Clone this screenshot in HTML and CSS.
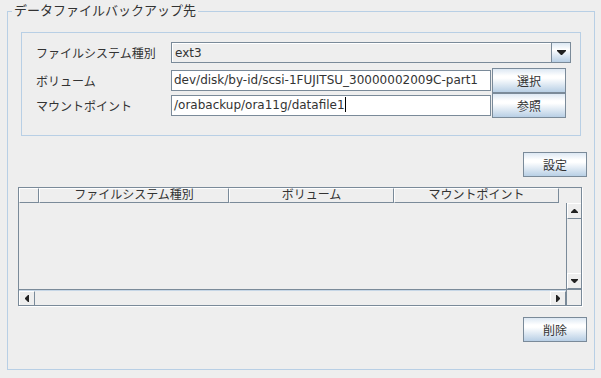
FILE: index.html
```html
<!DOCTYPE html>
<html lang="ja">
<head>
  <meta charset="UTF-8">
  <title>データファイルバックアップ先</title>
  <link rel="stylesheet" href="styles.css">
</head>
<body>
  <div class="group">
    <span class="group-title">データファイルバックアップ先</span>

    <div class="form-panel">
      <div class="form-row first">
        <span class="label">ファイルシステム種別</span>
        <div class="combo">
          <span class="combo-text">ext3</span>
          <span class="combo-btn">
            <svg width="9" height="6" viewBox="0 0 9 6"><polygon points="0,0 9,0 9,1 5,5 4,5 0,1" fill="#222"/></svg>
          </span>
        </div>
      </div>
      <div class="form-row">
        <span class="label">ボリューム</span>
        <div class="field">dev/disk/by-id/scsi-1FUJITSU_30000002009C-part1</div>
        <button class="btn btn-side">選択</button>
      </div>
      <div class="form-row">
        <span class="label">マウントポイント</span>
        <div class="field">/orabackup/ora11g/datafile1<span class="caret"></span></div>
        <button class="btn btn-side">参照</button>
      </div>
    </div>

    <div class="actions set-row">
      <button class="btn">設定</button>
    </div>

    <div class="table-pane">
      <div class="table-head">
        <div class="th th-num"></div>
        <div class="th th-type">ファイルシステム種別</div>
        <div class="th th-vol">ボリューム</div>
        <div class="th th-mount">マウントポイント</div>
      </div>
      <div class="table-main">
        <div class="viewport"></div>
        <div class="vscroll">
          <span class="sbtn">
            <svg width="7" height="4" viewBox="0 0 7 4"><polygon points="3,0 4,0 7,3 7,4 0,4 0,3" fill="#222"/></svg>
          </span>
          <span class="vtrack"></span>
          <span class="sbtn">
            <svg width="7" height="4" viewBox="0 0 7 4"><polygon points="0,0 7,0 7,1 4,4 3,4 0,1" fill="#222"/></svg>
          </span>
        </div>
      </div>
      <div class="table-foot">
        <div class="hscroll">
          <span class="sbtn">
            <svg width="4" height="7" viewBox="0 0 4 7"><polygon points="0,3 0,4 3,7 4,7 4,0 3,0" fill="#222"/></svg>
          </span>
          <span class="htrack"></span>
          <span class="sbtn">
            <svg width="4" height="7" viewBox="0 0 4 7"><polygon points="0,0 1,0 4,3 4,4 1,7 0,7" fill="#222"/></svg>
          </span>
        </div>
        <div class="corner"></div>
      </div>
    </div>

    <div class="actions del-row">
      <button class="btn">削除</button>
    </div>
  </div>
</body>
</html>
```

FILE: styles.css
```css
* {
  padding: 0;
  margin: 0;
  box-sizing: border-box;
}
html, body {
  width: 100%;
  height: 100%;
}
body {
  background: #eeeeee;
  color: #333333;
  font-family: "DejaVu Sans", "Noto Sans CJK JP", sans-serif;
  font-size: 12px;
  overflow: hidden;
}

/* titled border */
.group {
  position: relative;
  margin: 11px 0 0 7px;
  width: 588px;
  height: 359px;
  border: 1px solid #b8cfe5;
  padding: 20px 7px 0 10px;
}
.group-title {
  position: absolute;
  left: 4px;
  top: -9px;
  padding: 0 2px;
  background: #eeeeee;
  font-size: 13px;
  line-height: 16px;
}

/* form */
.form-panel {
  margin-left: 3px;
  width: 560px;
  height: 104px;
  border: 1px solid #b8cfe5;
  padding: 9px 0 0 14px;
}
.form-row {
  display: flex;
  align-items: center;
  height: 25px;
}
.form-row.first {
  height: 21px;
  margin-bottom: 5px;
}
.label {
  width: 135px;
  flex: none;
}
.combo {
  display: flex;
  width: 400px;
  height: 21px;
  border: 1px solid #7a8a99;
}
.combo-text {
  flex: 1;
  padding-left: 2px;
  line-height: 19px;
  border-top: 1px solid #ffffff;
  border-left: 1px solid #ffffff;
}
.combo-btn {
  width: 19px;
  display: flex;
  align-items: center;
  justify-content: center;
  border-left: 1px solid #7a8a99;
  background: linear-gradient(#dde8f3, #ffffff 35%, #b8cfe5);
}
.field {
  width: 320px;
  height: 21px;
  margin-right: 1px;
  border: 1px solid #7a8a99;
  background: #ffffff;
  padding-left: 2px;
  line-height: 19px;
  white-space: nowrap;
  overflow: hidden;
}
.caret {
  display: inline-block;
  width: 1px;
  height: 15px;
  background: #000;
  vertical-align: -3px;
}

/* buttons */
.btn {
  width: 64px;
  height: 25px;
  border: 1px solid #7a8a99;
  background: linear-gradient(#dde8f3, #ffffff 30%, #ffffff 40%, #b8cfe5);
  color: #333333;
  font-family: inherit;
  font-size: 12px;
}
.btn-side {
  width: 74px;
}
.actions {
  display: flex;
  justify-content: flex-end;
}
.set-row {
  margin-top: 16px;
}
.del-row {
  margin-top: 11px;
}

/* table */
.table-pane {
  margin-top: 10px;
  width: 564px;
  height: 119px;
  border: 1px solid #7a8a99;
  box-shadow: 1px 1px 0 #ffffff;
  display: flex;
  flex-direction: column;
}
.table-head {
  display: flex;
  height: 15px;
  flex: none;
}
.th {
  height: 15px;
  border-top: 1px solid #ffffff;
  border-left: 1px solid #ffffff;
  border-right: 1px solid #7a8a99;
  border-bottom: 1px solid #7a8a99;
  text-align: center;
  line-height: 13px;
  white-space: nowrap;
}
.th-num { width: 20px; }
.th-type { width: 190px; }
.th-vol { width: 165px; }
.th-mount { width: 165px; }

.table-main {
  display: flex;
  flex: 1;
}
.viewport {
  flex: 1;
}
.vscroll {
  width: 15px;
  display: flex;
  flex-direction: column;
  border-left: 1px solid #7a8a99;
}
.vtrack {
  flex: 1;
}
.sbtn {
  width: 14px;
  height: 16px;
  display: flex;
  align-items: center;
  justify-content: center;
  border-top: 1px solid #ffffff;
  border-left: 1px solid #ffffff;
  border-bottom: 1px solid #7a8a99;
  background: #eeeeee;
}
.table-foot {
  display: flex;
  height: 16px;
  flex: none;
  border-top: 1px solid #7a8a99;
}
.hscroll {
  flex: 1;
  display: flex;
  border-top: 1px solid #c6d6e6;
}
.hscroll .sbtn {
  width: 16px;
  height: 14px;
  border-bottom: none;
  border-right: 1px solid #7a8a99;
}
.htrack {
  flex: 1;
}
.corner {
  width: 15px;
  border-left: 1px solid #7a8a99;
}
```
